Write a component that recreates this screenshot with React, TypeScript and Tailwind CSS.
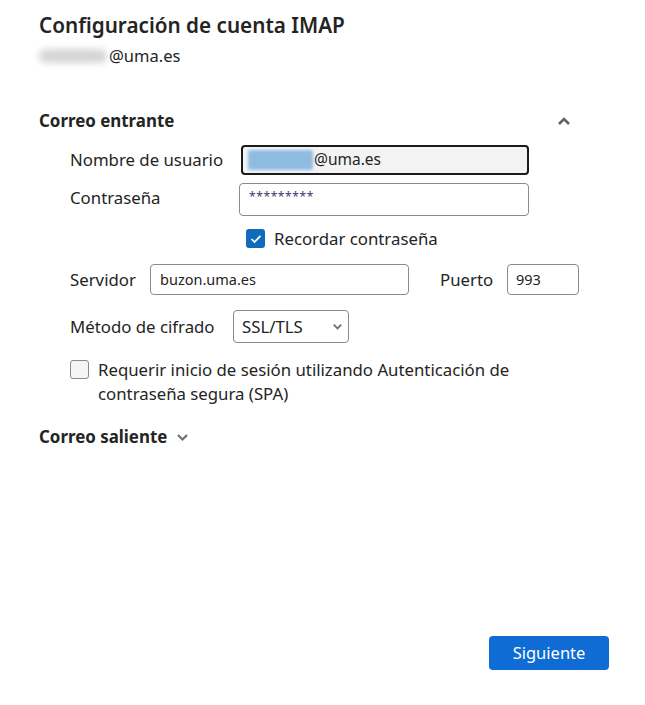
import { useState } from "react";

const font = { fontFamily: '"Noto Sans", "Open Sans", Arial, sans-serif' };

function ChevronUp() {
  return (
    <svg width="12" height="8" viewBox="0 0 12 8" className="text-[#616161]">
      <path d="M1 7 L6 2 L11 7" stroke="currentColor" strokeWidth="2.6" fill="none" />
    </svg>
  );
}

function ChevronDown({ size = 12 }: { size?: number }) {
  return (
    <svg width={size} height={size * 0.66} viewBox="0 0 12 8" className="text-[#707070]">
      <path d="M1 1 L6 6 L11 1" stroke="currentColor" strokeWidth="2.4" fill="none" />
    </svg>
  );
}

function Check() {
  return (
    <svg width="12" height="10" viewBox="0 0 12 10">
      <path d="M1.5 5 L4.5 8 L10.5 1.8" stroke="white" strokeWidth="1.7" fill="none" />
    </svg>
  );
}

export default function App() {
  const [remember, setRemember] = useState(true);
  const [spa, setSpa] = useState(false);

  return (
    <div style={font} className="relative h-[705px] w-[645px] bg-white text-[#242424]">
      <div className="pl-[39px] pr-[36px] pt-[10px]">
        <h1 className="text-[20.7px] font-semibold leading-[30px]">Configuración de cuenta IMAP</h1>
        <div className="mt-[5px] flex items-center text-[16.5px] leading-[22px]">
          <span className="mr-[2px] inline-block h-[14px] w-[68px] rounded-full bg-[#d6d6d6] blur-[3px]" />
          <span>@uma.es</span>
        </div>

        <div className="mt-[42px] flex items-center justify-between pr-[39px]">
          <h2 className="text-[16.9px] font-bold leading-[24px]">Correo entrante</h2>
          <ChevronUp />
        </div>

        <div className="pl-[31px] text-[16.8px]">
          <div className="mt-[12px] flex items-center">
            <span className="w-[171px]">Nombre de usuario</span>
            <div className="flex h-[30px] w-[288px] items-center rounded-[4px] border-2 border-[#1b1b1b] bg-[#f3f3f3] pl-[5px] text-[15.5px]">
              <span className="h-[20px] w-[65px] rounded-[3px] bg-[#8fbbe3] blur-[1.5px]" />
              <span className="ml-[1px]">@uma.es</span>
            </div>
          </div>

          <div className="mt-[8px] flex items-start">
            <span className="mt-[2px] w-[169px]">Contraseña</span>
            <div className="h-[33px] w-[290px] rounded-[4px] border border-[#8a8a8a] pl-[9px] pt-[5px] text-[12px] leading-[16px] tracking-[0.6px] text-[#3b3b6b]">
              *********
            </div>
          </div>

          <label className="ml-[176px] mt-[10px] flex cursor-pointer items-center gap-[9px]">
            <button
              type="button"
              onClick={() => setRemember(!remember)}
              className={`flex h-[19px] w-[19px] items-center justify-center rounded-[3px] ${
                remember ? "bg-[#0f6cbd]" : "border border-[#8a8a8a] bg-[#f5f5f5]"
              }`}
            >
              {remember ? <Check /> : null}
            </button>
            <span>Recordar contraseña</span>
          </label>

          <div className="mt-[13px] flex items-center">
            <span className="w-[80px]">Servidor</span>
            <div className="flex h-[31px] w-[259px] items-center rounded-[4px] border border-[#8a8a8a] pl-[9px] text-[14.5px]">
              buzon.uma.es
            </div>
            <span className="ml-[31px] w-[67px]">Puerto</span>
            <div className="flex h-[31px] w-[72px] items-center rounded-[4px] border border-[#8a8a8a] pl-[8px] text-[14.5px]">
              993
            </div>
          </div>

          <div className="mt-[15px] flex items-center">
            <span className="w-[163px]">Método de cifrado</span>
            <div className="flex h-[33px] w-[116px] items-center justify-between rounded-[4px] border border-[#8a8a8a] pl-[8px] pr-[6px]">
              <span>SSL/TLS</span>
              <ChevronDown size={9} />
            </div>
          </div>

          <label className="mt-[15px] flex cursor-pointer items-start gap-[9px]">
            <button
              type="button"
              onClick={() => setSpa(!spa)}
              className={`mt-[2px] flex h-[19px] w-[19px] shrink-0 items-center justify-center rounded-[3px] ${
                spa ? "bg-[#0f6cbd]" : "border border-[#8a8a8a] bg-[#f5f5f5]"
              }`}
            >
              {spa ? <Check /> : null}
            </button>
            <span className="w-[430px] leading-[24px]">
              Requerir inicio de sesión utilizando Autenticación de contraseña segura (SPA)
            </span>
          </label>
        </div>

        <div className="mt-[19px] flex items-center gap-[10px]">
          <h2 className="text-[16.9px] font-bold leading-[24px]">Correo saliente</h2>
          <ChevronDown size={11} />
        </div>
      </div>

      <div className="absolute bottom-[35px] right-[36px]">
        <button
          type="button"
          className="h-[34px] w-[120px] rounded-[4px] bg-[#0f6cd4] text-[16.5px] text-white"
        >
          Siguiente
        </button>
      </div>
    </div>
  );
}
